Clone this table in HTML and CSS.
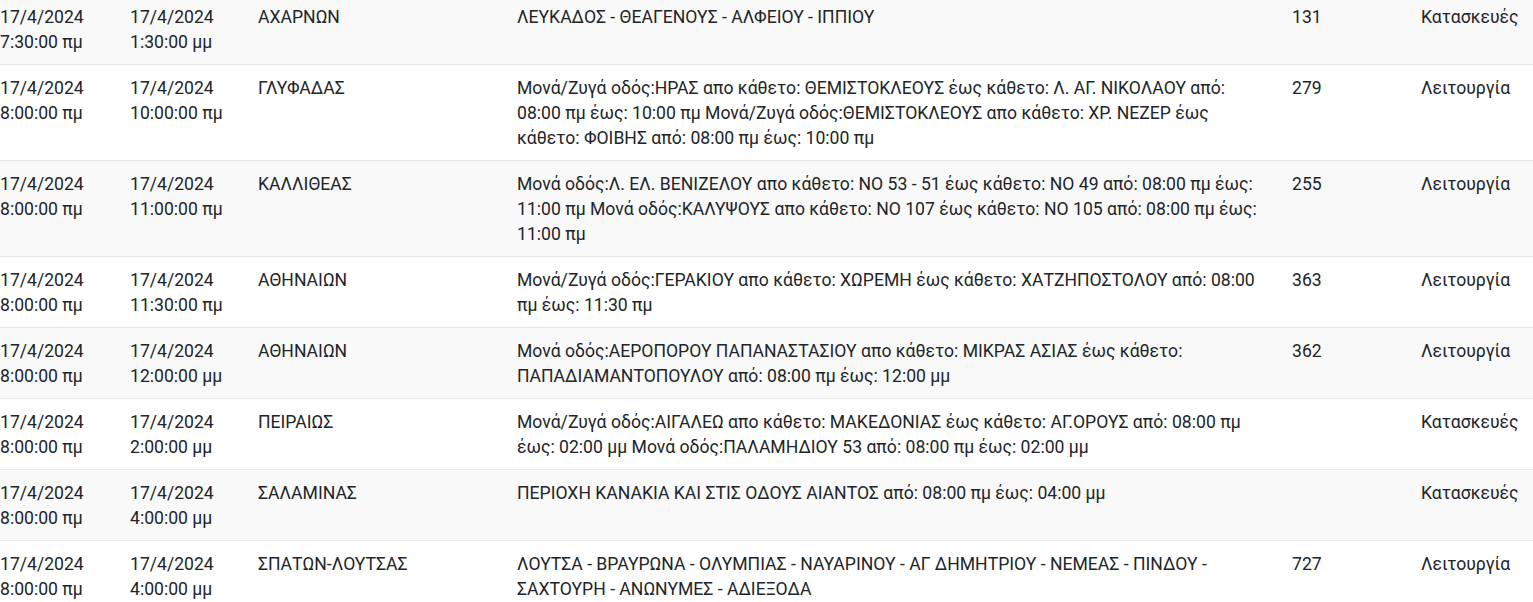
FILE: index.html
```html
<!DOCTYPE html>
<html lang="el">
<head>
    <meta charset="UTF-8">
    <meta name="viewport" content="width=device-width, initial-scale=1.0">
    <title>Κυκλοφοριακές ρυθμίσεις</title>
    <link rel="stylesheet" href="styles.css">
</head>
<body>
    <table class="works">
        <colgroup>
            <col class="c-start">
            <col class="c-end">
            <col class="c-city">
            <col class="c-desc">
            <col class="c-num">
            <col class="c-type">
        </colgroup>
        <tbody>
            <tr>
                <td>17/4/2024 7:30:00 πμ</td>
                <td>17/4/2024 1:30:00 μμ</td>
                <td>ΑΧΑΡΝΩΝ</td>
                <td>ΛΕΥΚΑΔΟΣ - ΘΕΑΓΕΝΟΥΣ - ΑΛΦΕΙΟΥ - ΙΠΠΙΟΥ</td>
                <td>131</td>
                <td>Κατασκευές</td>
            </tr>
            <tr>
                <td>17/4/2024 8:00:00 πμ</td>
                <td>17/4/2024 10:00:00 πμ</td>
                <td>ΓΛΥΦΑΔΑΣ</td>
                <td>Μονά/Ζυγά οδός:ΗΡΑΣ απο κάθετο: ΘΕΜΙΣΤΟΚΛΕΟΥΣ έως κάθετο: Λ. ΑΓ. ΝΙΚΟΛΑΟΥ από: 08:00 πμ έως: 10:00 πμ Μονά/Ζυγά οδός:ΘΕΜΙΣΤΟΚΛΕΟΥΣ απο κάθετο: ΧΡ. ΝΕΖΕΡ έως κάθετο: ΦΟΙΒΗΣ από: 08:00 πμ έως: 10:00 πμ</td>
                <td>279</td>
                <td>Λειτουργία</td>
            </tr>
            <tr>
                <td>17/4/2024 8:00:00 πμ</td>
                <td>17/4/2024 11:00:00 πμ</td>
                <td>ΚΑΛΛΙΘΕΑΣ</td>
                <td>Μονά οδός:Λ. ΕΛ. ΒΕΝΙΖΕΛΟΥ απο κάθετο: ΝΟ 53 - 51 έως κάθετο: ΝΟ 49 από: 08:00 πμ έως: 11:00 πμ Μονά οδός:ΚΑΛΥΨΟΥΣ απο κάθετο: ΝΟ 107 έως κάθετο: ΝΟ 105 από: 08:00 πμ έως: 11:00 πμ</td>
                <td>255</td>
                <td>Λειτουργία</td>
            </tr>
            <tr>
                <td>17/4/2024 8:00:00 πμ</td>
                <td>17/4/2024 11:30:00 πμ</td>
                <td>ΑΘΗΝΑΙΩΝ</td>
                <td>Μονά/Ζυγά οδός:ΓΕΡΑΚΙΟΥ απο κάθετο: ΧΩΡΕΜΗ έως κάθετο: ΧΑΤΖΗΠΟΣΤΟΛΟΥ από: 08:00 πμ έως: 11:30 πμ</td>
                <td>363</td>
                <td>Λειτουργία</td>
            </tr>
            <tr>
                <td>17/4/2024 8:00:00 πμ</td>
                <td>17/4/2024 12:00:00 μμ</td>
                <td>ΑΘΗΝΑΙΩΝ</td>
                <td>Μονά οδός:ΑΕΡΟΠΟΡΟΥ ΠΑΠΑΝΑΣΤΑΣΙΟΥ απο κάθετο: ΜΙΚΡΑΣ ΑΣΙΑΣ έως κάθετο: ΠΑΠΑΔΙΑΜΑΝΤΟΠΟΥΛΟΥ από: 08:00 πμ έως: 12:00 μμ</td>
                <td>362</td>
                <td>Λειτουργία</td>
            </tr>
            <tr>
                <td>17/4/2024 8:00:00 πμ</td>
                <td>17/4/2024 2:00:00 μμ</td>
                <td>ΠΕΙΡΑΙΩΣ</td>
                <td>Μονά/Ζυγά οδός:ΑΙΓΑΛΕΩ απο κάθετο: ΜΑΚΕΔΟΝΙΑΣ έως κάθετο: ΑΓ.ΟΡΟΥΣ από: 08:00 πμ έως: 02:00 μμ Μονά οδός:ΠΑΛΑΜΗΔΙΟΥ 53 από: 08:00 πμ έως: 02:00 μμ</td>
                <td></td>
                <td>Κατασκευές</td>
            </tr>
            <tr>
                <td>17/4/2024 8:00:00 πμ</td>
                <td>17/4/2024 4:00:00 μμ</td>
                <td>ΣΑΛΑΜΙΝΑΣ</td>
                <td>ΠΕΡΙΟΧΗ ΚΑΝΑΚΙΑ ΚΑΙ ΣΤΙΣ ΟΔΟΥΣ ΑΙΑΝΤΟΣ από: 08:00 πμ έως: 04:00 μμ</td>
                <td></td>
                <td>Κατασκευές</td>
            </tr>
            <tr>
                <td>17/4/2024 8:00:00 πμ</td>
                <td>17/4/2024 4:00:00 μμ</td>
                <td>ΣΠΑΤΩΝ-ΛΟΥΤΣΑΣ</td>
                <td>ΛΟΥΤΣΑ - ΒΡΑΥΡΩΝΑ - ΟΛΥΜΠΙΑΣ - ΝΑΥΑΡΙΝΟΥ - ΑΓ ΔΗΜΗΤΡΙΟΥ - ΝΕΜΕΑΣ - ΠΙΝΔΟΥ - ΣΑΧΤΟΥΡΗ - ΑΝΩΝΥΜΕΣ - ΑΔΙΕΞΟΔΑ</td>
                <td>727</td>
                <td>Λειτουργία</td>
            </tr>
        </tbody>
    </table>
</body>
</html>
```

FILE: styles.css
```css
body {
    font-family: Roboto, "Noto Sans", sans-serif;
    margin: 0;
    padding: 0;
    background-color: #fff;
    color: #212529;
    overflow: hidden;
}
.works {
    width: 100%;
    table-layout: fixed;
    border-collapse: collapse;
    margin-top: -6px;
    font-size: 17.6px;
    line-height: 25px;
}
.c-start { width: 130px; }
.c-end { width: 128px; }
.c-city { width: 259px; }
.c-desc { width: 775px; }
.c-num { width: 129px; }
.works td {
    padding: 11px 14px 9px 0;
    vertical-align: top;
    text-align: left;
    border-bottom: 1px solid #e6e6e6;
}
.works td:nth-child(4) {
    padding-right: 24px;
}
.works tr:nth-child(odd) {
    background-color: #f9f9f9;
}
```
